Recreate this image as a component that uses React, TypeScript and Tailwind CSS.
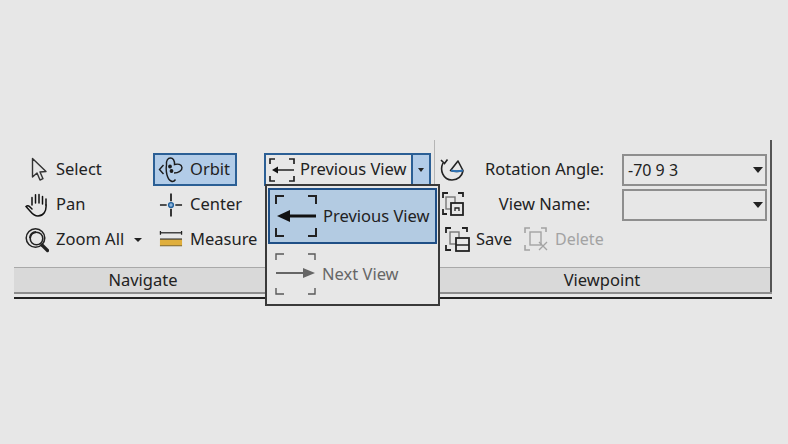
import React from 'react';

const SelectIcon = () => (
  <svg width="24" height="26" viewBox="0 0 24 26" fill="none" stroke="#333" strokeWidth="1.4">
    <path d="M7.500 1.500V20l4.500-4 3 7 3-1.300-3-6.700 6-.5z" strokeLinejoin="round" />
  </svg>
);

const PanIcon = () => (
  <svg width="24" height="26" viewBox="0 0 24 26" fill="none" stroke="#111" strokeWidth="1.500" strokeLinecap="round">
    <path d="M7 13V5.500M10.500 11V2.800M14 11V2.500M17.500 12V4.500M21 13V7" />
    <path d="M21 13c.6 6-2.500 11-8 11-4 0-6-2.500-8-5l-4-4.500c1-1 2.500-1 3.500 0L7 17" />
  </svg>
);

const ZoomIcon = () => (
  <svg width="24" height="26" viewBox="0 0 24 26" fill="none" stroke="#222">
    <circle cx="10.500" cy="11" r="9.300" strokeWidth="1.500" />
    <circle cx="11.500" cy="11.500" r="6.300" strokeWidth="1.600" />
    <path d="M5 11c0-3.500 2.500-6 6-6" strokeWidth="2" />
    <path d="M17 18l5.500 5.500" strokeWidth="3.200" strokeLinecap="round" />
  </svg>
);

const OrbitIcon = () => (
  <svg width="25" height="26" viewBox="0 0 25 26" fill="none" stroke="#1c1c1c" strokeWidth="1.400">
    <path d="M5.500 8L1.500 12.500 5.500 17" />
    <path d="M8.500 8C7.800 3.500 10 1 12.500 1S16.800 3.500 16.500 7.500c3.500-1 7-.2 7.500 3 .3 3-3.500 5.500-8 5.500" />
    <path d="M8.500 8c-1 6 .5 14 4.500 16 2 1 3.500 0 4.500-1.500" />
    <circle cx="12" cy="9.500" r="1.200" fill="#1c1c1c" />
    <circle cx="13.500" cy="14" r="1.200" fill="#1c1c1c" />
  </svg>
);

const CenterIcon = () => (
  <svg width="25" height="26" viewBox="0 0 25 26" fill="none">
    <path d="M12.500 1v8M12.500 17v8M1 13h7M17 13h7" stroke="#1c1c1c" strokeWidth="1.800" />
    <circle cx="12.500" cy="13" r="2.500" fill="#8fb4d8" stroke="#20609c" strokeWidth="1.500" />
  </svg>
);

const MeasureIcon = () => (
  <svg width="25" height="26" viewBox="0 0 25 26" fill="none">
    <path d="M1 5.500h23" stroke="#222" strokeWidth="1.300" />
    <path d="M1.500 3.500v4M23.500 3.500v4" stroke="#222" strokeWidth="1.300" />
    <rect x="1" y="12" width="23" height="7" fill="#dfae3c" />
    <path d="M1 12h23" stroke="#333" strokeWidth="1.200" />
    <path d="M1 19h23" stroke="#7a6228" strokeWidth="1" />
  </svg>
);

const RotationIcon = () => (
  <svg width="25" height="26" viewBox="0 0 25 26" fill="none" stroke="#222" strokeWidth="1.600">
    <path d="M3 6C-.5 13 3 23 12 23c6 0 10-4 11-9" />
    <path d="M1 3l3.500 3.500L7.500 2.500" />
    <path d="M10.500 13.500L18 4l5 9.500c-4 1-9 1-12.500 0z" strokeLinejoin="round" />
    <path d="M11 13.500c4 1 8 1 12 0" stroke="#2f73b5" strokeWidth="2" />
  </svg>
);

const ViewNameIcon = () => (
  <svg width="24" height="25" viewBox="0 0 24 25" fill="none" stroke="#222" strokeWidth="1.400">
    <path d="M1 6V1h5M16 1h5v4M1 17v5h4" strokeWidth="1.800" />
    <rect x="4" y="5" width="9" height="12" stroke="#777" />
    <rect x="9" y="11" width="12" height="12" strokeWidth="1.800" fill="#e7e7e7" />
    <path d="M13 19v-3h4v3" strokeWidth="1.300" />
  </svg>
);

const SaveIcon = () => (
  <svg width="25" height="25" viewBox="0 0 25 25" fill="none" stroke="#222" strokeWidth="1.400">
    <path d="M1 6V1h5M17 1h5v4M1 18v5h5" strokeWidth="1.800" />
    <rect x="5" y="5" width="9" height="12" stroke="#777" />
    <rect x="11" y="11" width="13" height="13" strokeWidth="1.800" fill="#e7e7e7" />
    <path d="M11 18h13" strokeWidth="1.500" />
  </svg>
);

const DeleteIcon = () => (
  <svg width="25" height="25" viewBox="0 0 25 25" fill="none" stroke="#a3a3a3" strokeWidth="1.400">
    <path d="M1 6V1h5M17 1h5v4M1 18v5h5" strokeWidth="1.600" />
    <rect x="6" y="5" width="11" height="13" />
    <path d="M15 15l8 8M23 15l-8 8" strokeWidth="1.300" />
  </svg>
);

const SmallPrevIcon = () => (
  <svg width="26" height="24" viewBox="0 0 26 24" fill="none">
    <path d="M1 6V1h5M20 1h5v5M1 18v5h5M20 23h5v-5" stroke="#222" strokeWidth="1.700" />
    <path d="M8 12h17" stroke="#222" strokeWidth="1.500" />
    <path d="M3 12l6-3.500v7z" fill="#111" />
  </svg>
);

const Caret = ({ className }: { className: string }) => (
  <span className={`block h-0 w-0 border-x-transparent border-t-[#222] ${className}`} />
);

const Tool = ({ icon, label, caret }: { icon: React.ReactNode; label: string; caret?: boolean }) => (
  <div className="flex h-[35px] items-center">
    <span className="flex w-[24px] shrink-0 justify-center">{icon}</span>
    <span className="ml-[7px] pb-[1px] text-[#222]">{label}</span>
    {caret && <Caret className="ml-[10px] mt-[1px] border-x-[4px] border-t-[4px]" />}
  </div>
);

const Combo = ({ value }: { value?: string }) => (
  <div className="flex h-[32px] w-[145px] items-center justify-between border-2 border-[#8e8e8e] pl-[4px] pr-[2px] text-[16px] text-[#222]">
    <span>{value}</span>
    <Caret className="border-x-[5px] border-t-[6px]" />
  </div>
);

export default function App() {
  return (
    <div className="h-[444px] w-[788px] overflow-hidden bg-[#e7e7e7] pl-[14px] pt-[140px] font-['Noto_Sans','Open_Sans',sans-serif] text-[16.5px]">
      <div className="w-[758px]">
        <div className="flex h-[152px] w-[758px]">
          {/* Painel Navigate */}
          <div className="flex w-[420px] flex-col">
            <div className="flex h-[127px] pl-[11px] pt-[12px]">
              <div className="w-[128px]">
                <Tool icon={<SelectIcon />} label="Select" />
                <Tool icon={<PanIcon />} label="Pan" />
                <Tool icon={<ZoomIcon />} label="Zoom All" caret />
              </div>
              <div className="w-[111px]">
                <div className="flex h-[35px] items-center">
                  <div className="flex h-[33px] w-[84px] items-center border-2 border-[#2b5f95] bg-[#b2cce8] pl-[3px]">
                    <span className="flex w-[25px] justify-center"><OrbitIcon /></span>
                    <span className="ml-[7px] pb-[1px] text-[#222]">Orbit</span>
                  </div>
                </div>
                <div className="pl-[6px]">
                  <Tool icon={<CenterIcon />} label="Center" />
                  <Tool icon={<MeasureIcon />} label="Measure" />
                </div>
              </div>
              <div className="relative">
                <div className="flex h-[35px] items-center">
                  <div className="flex h-[33px] w-[167px] border-2 border-[#2b5f95]">
                    <div className="flex flex-1 items-center pl-[3px] text-[#222]">
                      <SmallPrevIcon />
                      <span className="ml-[5px] pb-[1px]">Previous View</span>
                    </div>
                    <div className="flex w-[18px] items-center justify-center border-l-2 border-[#2b5f95] bg-[#b2cce8]">
                      <Caret className="border-x-[3px] border-t-[4px]" />
                    </div>
                  </div>
                </div>
                {/* Menu aberto sobre o painel */}
                <div className="absolute left-[1px] top-[32px] z-10 h-[122px] w-[175px] border-2 border-[#3a3a3a] bg-[#e7e7e7] pl-[1px] pt-[2px]">
                  <div className="flex h-[56px] w-[169px] items-center border-2 border-[#1f4f86] bg-[#b3cbe2] pl-[4px] text-[#222]">
                    <svg width="44" height="44" viewBox="0 0 44 44" fill="none">
                      <path d="M2 10V2h8M34 2h8v8M2 34v8h8M34 42h8v-8" stroke="#222" strokeWidth="2" />
                      <path d="M14 22h28" stroke="#111" strokeWidth="3" />
                      <path d="M3 22l13-6v12z" fill="#111" />
                    </svg>
                    <span className="ml-[5px]">Previous View</span>
                  </div>
                  <div className="flex h-[60px] items-center pl-[6px] text-[#666]">
                    <svg width="44" height="44" viewBox="0 0 44 44" fill="none">
                      <path d="M2 8V2h8M34 2h7v6M2 36v6h8M34 42h7v-6" stroke="#5a5a5a" strokeWidth="1.400" />
                      <path d="M2 21h30" stroke="#666" strokeWidth="2" />
                      <path d="M41 21l-12-5v10z" fill="#666" />
                    </svg>
                    <span className="ml-[4px]">Next View</span>
                  </div>
                </div>
              </div>
            </div>
            <div className="h-[25px] border-t border-[#a9a9a9] bg-[#d9d9d9] text-[#222]">
              <div className="flex h-full w-[258px] items-center justify-center">Navigate</div>
            </div>
          </div>

          {/* Painel Viewpoint */}
          <div className="flex flex-1 flex-col border-r-2 border-[#555]">
            <div className="flex h-[127px] flex-col border-l border-[#b5b5b5] pl-[5px] pt-[12px]">
              <div className="flex h-[35px] items-center">
                <span className="w-[45px]"><RotationIcon /></span>
                <span className="w-[119px] pb-[1px] text-center text-[#222]">Rotation Angle:</span>
                <span className="ml-[18px]"><Combo value="-70 9 3" /></span>
              </div>
              <div className="flex h-[35px] items-center">
                <span className="w-[45px] pl-[2px]"><ViewNameIcon /></span>
                <span className="w-[119px] pb-[1px] text-center text-[#222]">View Name:</span>
                <span className="ml-[18px]"><Combo /></span>
              </div>
              <div className="flex h-[35px] items-center pl-[5px]">
                <SaveIcon />
                <span className="ml-[6px] pb-[1px] text-[#222]">Save</span>
                <span className="ml-[12px]"><DeleteIcon /></span>
                <span className="ml-[6px] pb-[1px] text-[16px] text-[#a3a3a3]">Delete</span>
              </div>
            </div>
            <div className="flex h-[25px] items-center justify-center border-t border-[#a9a9a9] bg-[#d9d9d9] text-[#222]">Viewpoint</div>
          </div>
        </div>
        <div className="h-[2px] bg-[#8d8d8d]" />
        <div className="h-[3px] bg-[#e7e7e7]" />
        <div className="h-[2px] bg-[#222]" />
      </div>
    </div>
  );
}
